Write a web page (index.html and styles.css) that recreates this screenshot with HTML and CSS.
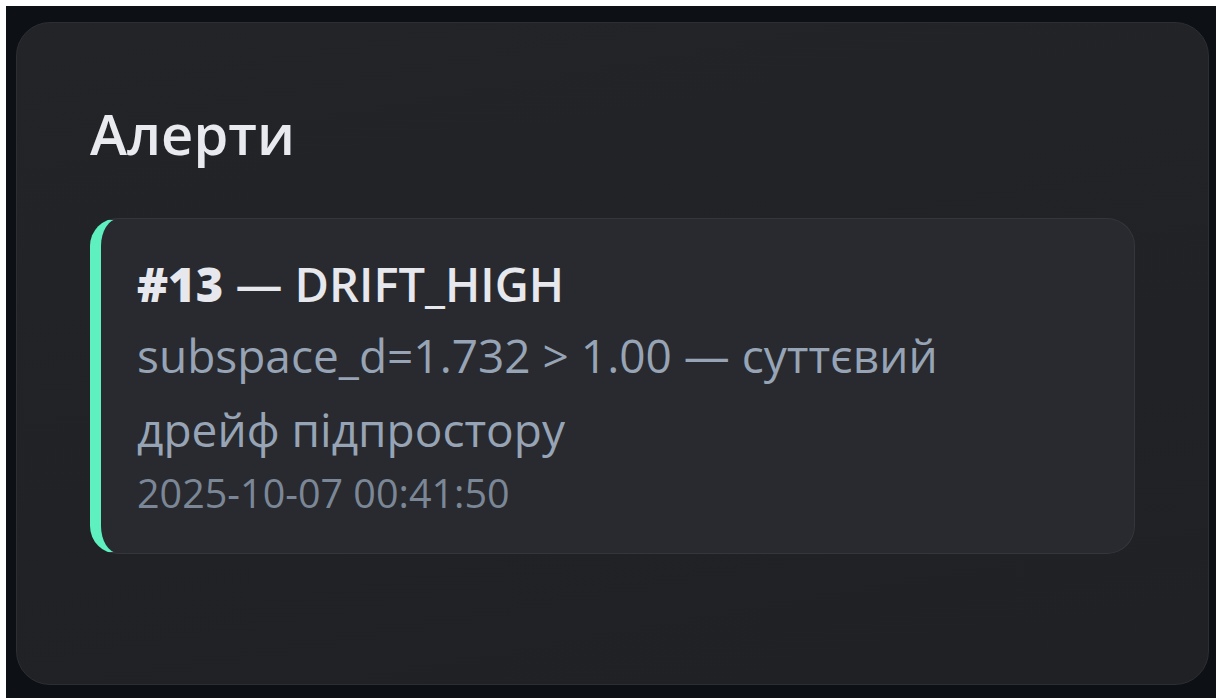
FILE: index.html
```html
<!DOCTYPE html>
<html lang="uk">
<head>
<meta charset="utf-8">
<title>Алерти</title>
<link rel="stylesheet" href="styles.css">
</head>
<body>
<main class="page">
  <section class="card">
    <h2 class="card-title">Алерти</h2>
    <div class="alert-list">
      <article class="alert">
        <div class="alert-head"><strong>#13</strong> — DRIFT_HIGH</div>
        <div class="alert-msg">subspace_d=1.732 &gt; 1.00 — суттєвий дрейф підпростору</div>
        <div class="alert-time">2025-10-07 00:41:50</div>
      </article>
    </div>
  </section>
</main>
</body>
</html>
```

FILE: styles.css
```css
html, body {
  margin: 0;
  padding: 0;
  background: #ffffff;
  height: 100%;
  overflow: hidden;
}

body {
  font-family: "Open Sans", "Noto Sans", sans-serif;
}

.page {
  margin: 6px 0 0 6px;
  height: calc(100% - 6px);
  box-sizing: border-box;
  background: #0d1014;
  padding: 16px 7px 13px 10px;
  display: flex;
}

.card {
  flex: 1;
  box-sizing: border-box;
  border: 1px solid #2c2e33;
  border-radius: 34px;
  background: linear-gradient(170deg, #222428 0%, #202226 60%, #1f2125 100%);
  padding: 77px 73px 0 73px;
}

.card-title {
  margin: 0 0 51px 0;
  font-size: 56px;
  line-height: 67px;
  font-weight: 600;
  color: #e8eaf0;
}

.alert {
  border: 1px solid #34363b;
  border-left: 11px solid #5ff0c0;
  border-radius: 28px;
  background: #282a2f;
  padding: 35px 60px 35px 36px;
}

.alert-head {
  font-size: 47px;
  line-height: 61px;
  font-weight: 600;
  color: #e6e8ee;
  margin-bottom: 3px;
}

.alert-head strong {
  font-weight: 800;
}

.alert-msg {
  font-size: 46px;
  line-height: 74px;
  color: #97a4b5;
}

.alert-time {
  margin-top: 2px;
  font-size: 39.5px;
  line-height: 50px;
  color: #7b8796;
}
```
